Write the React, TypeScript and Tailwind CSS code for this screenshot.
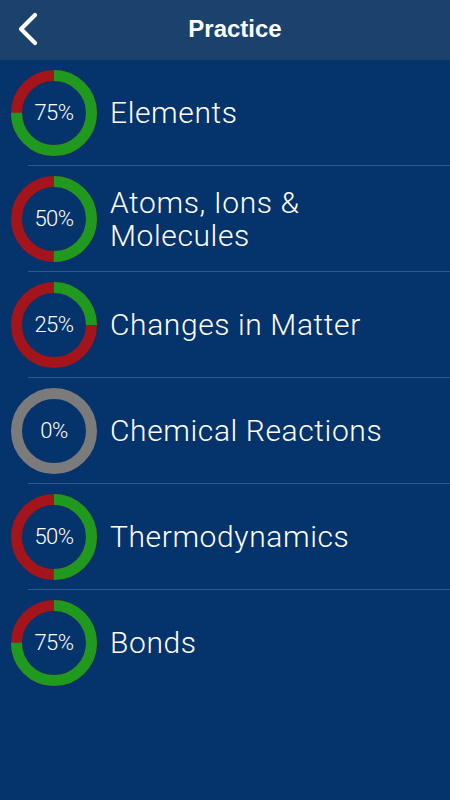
import React from "react";

type Item = { label: string[]; pct: number };

const items: Item[] = [
  { label: ["Elements"], pct: 75 },
  { label: ["Atoms, Ions &", "Molecules"], pct: 50 },
  { label: ["Changes in Matter"], pct: 25 },
  { label: ["Chemical Reactions"], pct: 0 },
  { label: ["Thermodynamics"], pct: 50 },
  { label: ["Bonds"], pct: 75 },
];

function Ring({ pct }: { pct: number }) {
  const size = 86;
  const sw = 11;
  const r = (size - sw) / 2;
  const c = 2 * Math.PI * r;
  const g = (pct / 100) * c;
  return (
    <div className="relative w-[86px] h-[86px] shrink-0">
      <svg width={size} height={size} viewBox={`0 0 ${size} ${size}`}>
        {pct === 0 ? (
          <circle cx={43} cy={43} r={r} fill="none" stroke="#7b7b7b" strokeWidth={sw} />
        ) : (
          <g transform="rotate(-90 43 43)">
            <circle cx={43} cy={43} r={r} fill="none" stroke="#a3141b" strokeWidth={sw} />
            <circle
              cx={43}
              cy={43}
              r={r}
              fill="none"
              stroke="#1f9a1f"
              strokeWidth={sw}
              strokeDasharray={`${g} ${c}`}
            />
          </g>
        )}
      </svg>
      <div className="absolute inset-0 flex items-center justify-center text-white text-[22px] font-light tracking-[-0.5px] [font-family:Roboto,'Liberation_Sans',sans-serif]">
        {pct}%
      </div>
    </div>
  );
}

export default function App() {
  return (
    <div className="w-[450px] h-[800px] bg-[#05336b] flex flex-col overflow-hidden">
      <div className="h-[60px] bg-[#1b416d] flex items-center relative shrink-0">
        <svg
          className="absolute left-[16px] top-[12px]"
          width="24"
          height="34"
          viewBox="0 0 24 34"
        >
          <path
            d="M19 3 L5 17 L19 31"
            fill="none"
            stroke="white"
            strokeWidth="4.2"
            strokeLinecap="round"
            strokeLinejoin="round"
          />
        </svg>
        <div className="w-full pl-[20px] pb-[3px] text-center text-white text-[24px] font-bold [font-family:'Liberation_Sans',Arial,sans-serif]">
          Practice
        </div>
      </div>
      <div className="flex flex-col">
        {items.map((it, i) => (
          <div key={i} className="flex flex-col">
            <div className="h-[105px] flex items-center pl-[11px]">
              <Ring pct={it.pct} />
              <div className="ml-[13px] text-white text-[30px] font-light tracking-[0.6px] leading-[33px] [font-family:Roboto,'Liberation_Sans',sans-serif]">
                {it.label.map((l, j) => (
                  <div key={j}>{l}</div>
                ))}
              </div>
            </div>
            {i < items.length - 1 && <div className="ml-[28px] h-px bg-[#2a5a90]" />}
          </div>
        ))}
      </div>
    </div>
  );
}
